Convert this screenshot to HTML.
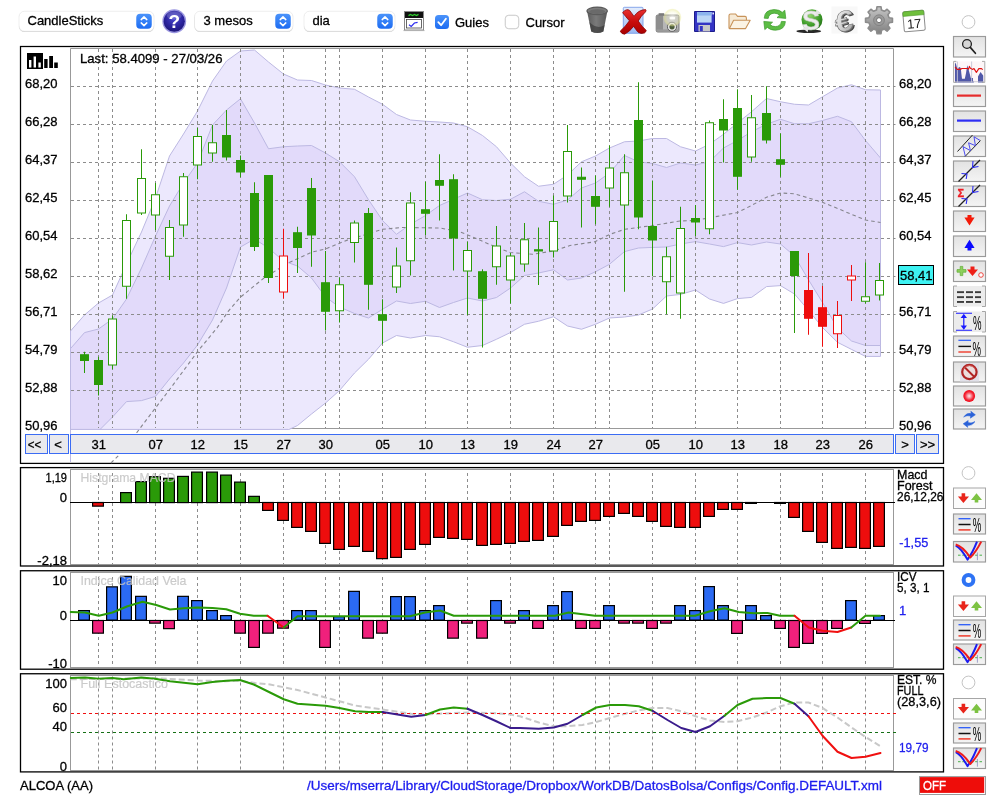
<!DOCTYPE html>
<html lang="ca"><head><meta charset="utf-8"><title>ALCOA (AA)</title>
<style>html,body{margin:0;padding:0;background:#fff;}body{width:1000px;height:800px;overflow:hidden;position:relative;font-family:"Liberation Sans", sans-serif;}svg{position:absolute;left:0;top:0;display:block;will-change:transform;}text{font-family:"Liberation Sans", sans-serif;}</style></head><body>
<svg width="1000" height="800" viewBox="0 0 1000 800">
<defs>
<linearGradient id="btn" x1="0" y1="0" x2="0" y2="1"><stop offset="0" stop-color="#e2e2e2"/><stop offset="1" stop-color="#f4f4f4"/></linearGradient>
<linearGradient id="stp" x1="0" y1="0" x2="0" y2="1"><stop offset="0" stop-color="#4b93fa"/><stop offset="1" stop-color="#1d6cf2"/></linearGradient>
<radialGradient id="help" cx="0.5" cy="0.35" r="0.7"><stop offset="0" stop-color="#4a48d0"/><stop offset="0.6" stop-color="#2a229c"/><stop offset="1" stop-color="#1a1470"/></radialGradient>
<radialGradient id="reddot" cx="0.5" cy="0.5" r="0.5"><stop offset="0" stop-color="#ffe8e8"/><stop offset="0.3" stop-color="#f8a0a8"/><stop offset="0.72" stop-color="#f42838"/><stop offset="1" stop-color="#f00818"/></radialGradient>
<radialGradient id="gsphere" cx="0.4" cy="0.3" r="0.8"><stop offset="0" stop-color="#8ed36a"/><stop offset="0.6" stop-color="#3c9a28"/><stop offset="1" stop-color="#1d6412"/></radialGradient>
<linearGradient id="silver" x1="0" y1="0" x2="1" y2="1"><stop offset="0" stop-color="#ffffff"/><stop offset="0.5" stop-color="#d0d0d0"/><stop offset="1" stop-color="#9a9a9a"/></linearGradient>
<linearGradient id="gear" x1="0" y1="0" x2="0" y2="1"><stop offset="0" stop-color="#c6c6c6"/><stop offset="1" stop-color="#808080"/></linearGradient>
<linearGradient id="trash" x1="0" y1="0" x2="1" y2="0"><stop offset="0" stop-color="#5c5c5c"/><stop offset="0.45" stop-color="#7a7a7a"/><stop offset="1" stop-color="#585858"/></linearGradient>
<radialGradient id="glow" cx="0.5" cy="0.5" r="0.5"><stop offset="0" stop-color="#ffffff" stop-opacity="0.8"/><stop offset="0.5" stop-color="#fbfbe4" stop-opacity="0.35"/><stop offset="0.85" stop-color="#e8e894" stop-opacity="0.5"/><stop offset="1" stop-color="#ecec9c" stop-opacity="0"/></radialGradient>
<linearGradient id="page" x1="0" y1="0" x2="0" y2="1"><stop offset="0" stop-color="#e4edfc"/><stop offset="1" stop-color="#9ab8f2"/></linearGradient>
<linearGradient id="redx" x1="0" y1="0" x2="0" y2="1"><stop offset="0" stop-color="#e83030"/><stop offset="0.5" stop-color="#c80c0c"/><stop offset="1" stop-color="#a80000"/></linearGradient>
<clipPath id="cm"><rect x="70" y="48.5" width="823.5" height="381.5"/></clipPath>
<clipPath id="cr1"><rect x="894" y="468" width="49" height="98"/></clipPath>
<filter id="sh" x="-10%" y="-20%" width="120%" height="160%"><feGaussianBlur stdDeviation="0.7"/></filter>
</defs>
<g id="main">
<rect x="20.5" y="46.5" width="923" height="416.9" fill="#fff" stroke="#000" stroke-width="1.25"/>
<path d="M70.5 429 V48.5 H893.5 V428.5 H71" fill="none" stroke="#999"/>
<g clip-path="url(#cm)">
<polygon points="70.5,331 84.5,315 98.5,303 112.5,295 126.5,264 141.5,232 155.5,198 169.5,156 183.5,134 197.5,111 212.5,81 226.5,61 240.5,51 254.5,50 268.5,62 283.5,74 297.5,80 311.5,80.5 325.5,85 339.5,88 354.5,89.25 368.5,97 382.5,104.25 396.5,114.5 410.5,120 425.5,121.25 439.5,122 453.5,123 467.5,126.75 482.5,135.5 496.5,146.75 510.5,163 524.5,176.75 538.5,186.25 553.5,184.25 567.5,175 581.5,161.75 595.5,156 609.5,148 624.5,141.75 638.5,141 652.5,138.5 666.5,138.5 680.5,146.75 695.5,151 709.5,144.25 723.5,134.25 737.5,123 751.5,111.75 766.5,98.5 780.5,101.75 794.5,104.25 808.5,105 822.5,96.75 837.5,88 851.5,84.75 865.5,89.75 880.5,90 880.5,356.4 865.5,356.4 851.5,349.4 837.5,342.3 822.5,327.5 808.5,310.3 794.5,294 780.5,285.6 766.5,286.6 751.5,297.4 737.5,298.6 723.5,303.4 709.5,299 695.5,290 680.5,294.4 666.5,296 652.5,309 638.5,315 624.5,317 609.5,318 595.5,324.25 581.5,329.25 567.5,326 553.5,316.75 538.5,321.25 524.5,324.25 510.5,332.5 496.5,339.25 482.5,345.5 467.5,347.25 453.5,341.75 439.5,336.75 425.5,335.5 410.5,338 396.5,335.5 382.5,343 368.5,359.25 354.5,373 339.5,390.5 325.5,403 311.5,414 297.5,425.5 283.5,432 268.5,445 254.5,460 240.5,475 226.5,490 212.5,510 197.5,530 183.5,550 169.5,570 155.5,590 141.5,610 126.5,630 112.5,650 98.5,670 84.5,690 70.5,700" fill="#ece8fd" stroke="#bcb8e2" stroke-width="1"/>
<polygon points="70.5,348.6 84.5,332.6 98.5,329 112.5,319 126.5,299 141.5,268 155.5,236 169.5,206 183.5,183 197.5,163 212.5,125 226.5,110 240.5,98.75 254.5,123 268.5,148.75 283.5,146.75 297.5,146 311.5,145.5 325.5,153 339.5,161.75 354.5,176.75 368.5,199.75 382.5,220.5 396.5,234.25 410.5,224.25 425.5,215.5 439.5,205.5 453.5,199.25 467.5,193 482.5,199.75 496.5,200.5 510.5,199.25 524.5,191.75 538.5,201.25 553.5,204.25 567.5,200 581.5,188 595.5,183 609.5,173 624.5,155.5 638.5,161.75 652.5,163.5 666.5,167.5 680.5,163 695.5,165 709.5,161.75 723.5,148 737.5,140.5 751.5,131.75 766.5,124.25 780.5,119.25 794.5,123.75 808.5,123.75 822.5,120.5 837.5,116.25 851.5,121.75 865.5,140.5 880.5,158 880.5,345.5 865.5,345.5 851.5,341 837.5,328 822.5,302.5 808.5,279.8 794.5,256 780.5,244 766.5,242 751.5,245 737.5,242.6 723.5,246.6 709.5,244 695.5,241.6 680.5,244 666.5,247 652.5,247.4 638.5,248 624.5,251.6 609.5,264.25 595.5,271.75 581.5,278 567.5,280 553.5,269.75 538.5,273 524.5,275.5 510.5,288 496.5,297.5 482.5,301 467.5,298 453.5,302.5 439.5,307.5 425.5,301.25 410.5,303.5 396.5,301 382.5,309.25 368.5,318 354.5,313.5 339.5,307 325.5,297 311.5,278 297.5,266 283.5,261 268.5,248 254.5,239 240.5,247 226.5,288 212.5,320 197.5,345 183.5,363 169.5,379 155.5,396.4 141.5,400.6 126.5,401.6 112.5,417 98.5,431 84.5,445 70.5,470" fill="#e2dafa" stroke="#bcb8e2" stroke-width="1"/>
<line x1="70.5" y1="429.4" x2="288" y2="429.4" stroke="#bcb8e2"/>
</g>
<line x1="70.5" y1="331" x2="70.5" y2="462" stroke="#bcb8e2"/>
<g stroke="#8c8c8c" stroke-width="1" stroke-dasharray="3 3" fill="none">
<line x1="71" y1="86.5" x2="895.5" y2="86.5"/>
<line x1="71" y1="124.5" x2="895.5" y2="124.5"/>
<line x1="71" y1="162.5" x2="895.5" y2="162.5"/>
<line x1="71" y1="200.5" x2="895.5" y2="200.5"/>
<line x1="71" y1="238.5" x2="895.5" y2="238.5"/>
<line x1="71" y1="276.5" x2="895.5" y2="276.5"/>
<line x1="71" y1="314.5" x2="895.5" y2="314.5"/>
<line x1="71" y1="352.5" x2="895.5" y2="352.5"/>
<line x1="71" y1="390.5" x2="895.5" y2="390.5"/>
<line x1="98.5" y1="49" x2="98.5" y2="428"/>
<line x1="112.5" y1="49" x2="112.5" y2="428"/>
<line x1="155.5" y1="49" x2="155.5" y2="428"/>
<line x1="197.5" y1="49" x2="197.5" y2="428"/>
<line x1="240.5" y1="49" x2="240.5" y2="428"/>
<line x1="283.5" y1="49" x2="283.5" y2="428"/>
<line x1="325.5" y1="49" x2="325.5" y2="428"/>
<line x1="339.5" y1="49" x2="339.5" y2="428"/>
<line x1="382.5" y1="49" x2="382.5" y2="428"/>
<line x1="425.5" y1="49" x2="425.5" y2="428"/>
<line x1="467.5" y1="49" x2="467.5" y2="428"/>
<line x1="510.5" y1="49" x2="510.5" y2="428"/>
<line x1="553.5" y1="49" x2="553.5" y2="428"/>
<line x1="595.5" y1="49" x2="595.5" y2="428"/>
<line x1="609.5" y1="49" x2="609.5" y2="428"/>
<line x1="652.5" y1="49" x2="652.5" y2="428"/>
<line x1="695.5" y1="49" x2="695.5" y2="428"/>
<line x1="737.5" y1="49" x2="737.5" y2="428"/>
<line x1="780.5" y1="49" x2="780.5" y2="428"/>
<line x1="822.5" y1="49" x2="822.5" y2="428"/>
<line x1="865.5" y1="49" x2="865.5" y2="428"/>
</g>
<polyline points="111,463 118.6,455.4 136,433.6 155.4,408 170,389 198,351 217,328 228,311.6 240.6,297 264,278 288,263 312,252 325.4,249 350,239 354.5,238 382.5,229.25 402.5,227.5 440,228 460,231.75 475,238 495,246.75 510,252.5 532.5,254.25 553.5,251 570,245.5 595,241.75 610,234.25 625,229.25 652.5,225.5 680,221 695,220.5 715,216.75 737.5,212.5 751.5,205.5 766.5,197.25 780.5,193 794.5,193.75 808.5,198 822.5,202.25 836.5,208 851.25,214.25 865.5,220 880.5,222.5" fill="none" stroke="#85858c" stroke-width="1.1" stroke-dasharray="3.6 3"/>
<line x1="84.5" y1="351.75" x2="84.5" y2="373" stroke="#2a9a08" stroke-width="1"/>
<rect x="80.5" y="354.75" width="8" height="5.75" fill="#2a9a08" stroke="#2a9a08" stroke-width="1"/>
<line x1="98.5" y1="356.75" x2="98.5" y2="395.5" stroke="#2a9a08" stroke-width="1"/>
<rect x="94.5" y="360.5" width="8" height="24" fill="#2a9a08" stroke="#2a9a08" stroke-width="1"/>
<line x1="112.5" y1="315.5" x2="112.5" y2="369.25" stroke="#2a9a08" stroke-width="1"/>
<rect x="108.5" y="319" width="8" height="46" fill="#fff" stroke="#2a9a08" stroke-width="1"/>
<line x1="126.5" y1="214.25" x2="126.5" y2="298.75" stroke="#2a9a08" stroke-width="1"/>
<rect x="122.5" y="220.5" width="8" height="65.75" fill="#fff" stroke="#2a9a08" stroke-width="1"/>
<line x1="141.5" y1="149.25" x2="141.5" y2="215" stroke="#2a9a08" stroke-width="1"/>
<rect x="137.5" y="178.5" width="8" height="34.5" fill="#fff" stroke="#2a9a08" stroke-width="1"/>
<line x1="155.5" y1="183" x2="155.5" y2="230" stroke="#2a9a08" stroke-width="1"/>
<rect x="151.5" y="194.75" width="8" height="20.25" fill="#fff" stroke="#2a9a08" stroke-width="1"/>
<line x1="169.5" y1="220" x2="169.5" y2="280" stroke="#2a9a08" stroke-width="1"/>
<rect x="165.5" y="227.5" width="8" height="28.75" fill="#fff" stroke="#2a9a08" stroke-width="1"/>
<line x1="183.5" y1="173" x2="183.5" y2="236.75" stroke="#2a9a08" stroke-width="1"/>
<rect x="179.5" y="176.75" width="8" height="48.25" fill="#fff" stroke="#2a9a08" stroke-width="1"/>
<line x1="197.5" y1="128" x2="197.5" y2="179.25" stroke="#2a9a08" stroke-width="1"/>
<rect x="193.5" y="136.5" width="8" height="28.5" fill="#fff" stroke="#2a9a08" stroke-width="1"/>
<line x1="212.5" y1="125" x2="212.5" y2="161.75" stroke="#2a9a08" stroke-width="1"/>
<rect x="208.5" y="142.75" width="8" height="10.25" fill="#fff" stroke="#2a9a08" stroke-width="1"/>
<line x1="226.5" y1="110" x2="226.5" y2="160.5" stroke="#2a9a08" stroke-width="1"/>
<rect x="222.5" y="135.5" width="8" height="21.5" fill="#2a9a08" stroke="#2a9a08" stroke-width="1"/>
<line x1="240.5" y1="155.5" x2="240.5" y2="177.25" stroke="#2a9a08" stroke-width="1"/>
<rect x="236.5" y="160.5" width="8" height="11.5" fill="#2a9a08" stroke="#2a9a08" stroke-width="1"/>
<line x1="254.5" y1="182.25" x2="254.5" y2="251" stroke="#2a9a08" stroke-width="1"/>
<rect x="250.5" y="193.5" width="8" height="53" fill="#2a9a08" stroke="#2a9a08" stroke-width="1"/>
<line x1="268.5" y1="175" x2="268.5" y2="283" stroke="#2a9a08" stroke-width="1"/>
<rect x="264.5" y="175.5" width="8" height="102" fill="#2a9a08" stroke="#2a9a08" stroke-width="1"/>
<line x1="283.5" y1="228.75" x2="283.5" y2="298.75" stroke="#ee0d0d" stroke-width="1"/>
<rect x="279.5" y="256" width="8" height="36" fill="#fff" stroke="#ee0d0d" stroke-width="1"/>
<line x1="297.5" y1="226.75" x2="297.5" y2="273" stroke="#2a9a08" stroke-width="1"/>
<rect x="293.5" y="232.75" width="8" height="14.75" fill="#2a9a08" stroke="#2a9a08" stroke-width="1"/>
<line x1="311.5" y1="178" x2="311.5" y2="266.75" stroke="#2a9a08" stroke-width="1"/>
<rect x="307.5" y="188.5" width="8" height="46.5" fill="#2a9a08" stroke="#2a9a08" stroke-width="1"/>
<line x1="325.5" y1="251" x2="325.5" y2="330.5" stroke="#2a9a08" stroke-width="1"/>
<rect x="321.5" y="282.75" width="8" height="28.5" fill="#2a9a08" stroke="#2a9a08" stroke-width="1"/>
<line x1="339.5" y1="277.5" x2="339.5" y2="322.5" stroke="#2a9a08" stroke-width="1"/>
<rect x="335.5" y="284.75" width="8" height="26" fill="#fff" stroke="#2a9a08" stroke-width="1"/>
<line x1="354.5" y1="220.5" x2="354.5" y2="262.5" stroke="#2a9a08" stroke-width="1"/>
<rect x="350.5" y="223" width="8" height="19.5" fill="#fff" stroke="#2a9a08" stroke-width="1"/>
<line x1="368.5" y1="208" x2="368.5" y2="309.75" stroke="#2a9a08" stroke-width="1"/>
<rect x="364.5" y="213.5" width="8" height="70.75" fill="#2a9a08" stroke="#2a9a08" stroke-width="1"/>
<line x1="382.5" y1="299.25" x2="382.5" y2="344.25" stroke="#2a9a08" stroke-width="1"/>
<rect x="378.5" y="314.75" width="8" height="5.5" fill="#2a9a08" stroke="#2a9a08" stroke-width="1"/>
<line x1="396.5" y1="247.5" x2="396.5" y2="293" stroke="#2a9a08" stroke-width="1"/>
<rect x="392.5" y="266" width="8" height="21" fill="#fff" stroke="#2a9a08" stroke-width="1"/>
<line x1="410.5" y1="192.25" x2="410.5" y2="275.5" stroke="#2a9a08" stroke-width="1"/>
<rect x="406.5" y="203" width="8" height="57.75" fill="#fff" stroke="#2a9a08" stroke-width="1"/>
<line x1="425.5" y1="181.75" x2="425.5" y2="235" stroke="#2a9a08" stroke-width="1"/>
<rect x="421.5" y="209.75" width="8" height="3.5" fill="#2a9a08" stroke="#2a9a08" stroke-width="1"/>
<line x1="439.5" y1="154.25" x2="439.5" y2="220.5" stroke="#2a9a08" stroke-width="1"/>
<rect x="435.5" y="180.5" width="8" height="4.75" fill="#2a9a08" stroke="#2a9a08" stroke-width="1"/>
<line x1="453.5" y1="174.25" x2="453.5" y2="270.5" stroke="#2a9a08" stroke-width="1"/>
<rect x="449.5" y="179.75" width="8" height="58.25" fill="#2a9a08" stroke="#2a9a08" stroke-width="1"/>
<line x1="467.5" y1="241.75" x2="467.5" y2="315" stroke="#2a9a08" stroke-width="1"/>
<rect x="463.5" y="250.5" width="8" height="20.5" fill="#fff" stroke="#2a9a08" stroke-width="1"/>
<line x1="482.5" y1="269.25" x2="482.5" y2="347.5" stroke="#2a9a08" stroke-width="1"/>
<rect x="478.5" y="271.75" width="8" height="26.5" fill="#2a9a08" stroke="#2a9a08" stroke-width="1"/>
<line x1="496.5" y1="226" x2="496.5" y2="284.75" stroke="#2a9a08" stroke-width="1"/>
<rect x="492.5" y="246" width="8" height="20.75" fill="#fff" stroke="#2a9a08" stroke-width="1"/>
<line x1="510.5" y1="253" x2="510.5" y2="303.5" stroke="#2a9a08" stroke-width="1"/>
<rect x="506.5" y="256" width="8" height="24" fill="#fff" stroke="#2a9a08" stroke-width="1"/>
<line x1="524.5" y1="223" x2="524.5" y2="271.75" stroke="#2a9a08" stroke-width="1"/>
<rect x="520.5" y="239.75" width="8" height="24.25" fill="#fff" stroke="#2a9a08" stroke-width="1"/>
<line x1="538.5" y1="227.5" x2="538.5" y2="285" stroke="#2a9a08" stroke-width="1"/>
<rect x="534.5" y="249.75" width="8" height="1.25" fill="#2a9a08" stroke="#2a9a08" stroke-width="1"/>
<line x1="553.5" y1="195.5" x2="553.5" y2="257.5" stroke="#2a9a08" stroke-width="1"/>
<rect x="549.5" y="221.5" width="8" height="29.5" fill="#fff" stroke="#2a9a08" stroke-width="1"/>
<line x1="567.5" y1="125" x2="567.5" y2="202.5" stroke="#2a9a08" stroke-width="1"/>
<rect x="563.5" y="151.5" width="8" height="44.5" fill="#fff" stroke="#2a9a08" stroke-width="1"/>
<line x1="581.5" y1="167.5" x2="581.5" y2="227.5" stroke="#2a9a08" stroke-width="1"/>
<rect x="577.5" y="177.25" width="8" height="2" fill="#2a9a08" stroke="#2a9a08" stroke-width="1"/>
<line x1="595.5" y1="175.5" x2="595.5" y2="224.25" stroke="#2a9a08" stroke-width="1"/>
<rect x="591.5" y="196.5" width="8" height="9.75" fill="#2a9a08" stroke="#2a9a08" stroke-width="1"/>
<line x1="609.5" y1="145.5" x2="609.5" y2="206.75" stroke="#2a9a08" stroke-width="1"/>
<rect x="605.5" y="168" width="8" height="20" fill="#fff" stroke="#2a9a08" stroke-width="1"/>
<line x1="624.5" y1="154.25" x2="624.5" y2="291.75" stroke="#2a9a08" stroke-width="1"/>
<rect x="620.5" y="172.75" width="8" height="32.25" fill="#fff" stroke="#2a9a08" stroke-width="1"/>
<line x1="638.5" y1="82.25" x2="638.5" y2="229.25" stroke="#2a9a08" stroke-width="1"/>
<rect x="634.5" y="120.5" width="8" height="96.5" fill="#2a9a08" stroke="#2a9a08" stroke-width="1"/>
<line x1="652.5" y1="180.5" x2="652.5" y2="276.25" stroke="#2a9a08" stroke-width="1"/>
<rect x="648.5" y="226.5" width="8" height="13.5" fill="#2a9a08" stroke="#2a9a08" stroke-width="1"/>
<line x1="666.5" y1="246.75" x2="666.5" y2="314.25" stroke="#2a9a08" stroke-width="1"/>
<rect x="662.5" y="256.75" width="8" height="25" fill="#fff" stroke="#2a9a08" stroke-width="1"/>
<line x1="680.5" y1="206.75" x2="680.5" y2="318.75" stroke="#2a9a08" stroke-width="1"/>
<rect x="676.5" y="228.5" width="8" height="64.5" fill="#fff" stroke="#2a9a08" stroke-width="1"/>
<line x1="695.5" y1="205" x2="695.5" y2="236" stroke="#2a9a08" stroke-width="1"/>
<rect x="691.5" y="218.5" width="8" height="3.5" fill="#2a9a08" stroke="#2a9a08" stroke-width="1"/>
<line x1="709.5" y1="120.5" x2="709.5" y2="234.25" stroke="#2a9a08" stroke-width="1"/>
<rect x="705.5" y="122.75" width="8" height="106" fill="#fff" stroke="#2a9a08" stroke-width="1"/>
<line x1="723.5" y1="99.25" x2="723.5" y2="162.5" stroke="#2a9a08" stroke-width="1"/>
<rect x="719.5" y="119.5" width="8" height="10.5" fill="#2a9a08" stroke="#2a9a08" stroke-width="1"/>
<line x1="737.5" y1="89.25" x2="737.5" y2="189.75" stroke="#2a9a08" stroke-width="1"/>
<rect x="733.5" y="108.5" width="8" height="67.75" fill="#2a9a08" stroke="#2a9a08" stroke-width="1"/>
<line x1="751.5" y1="95" x2="751.5" y2="161.75" stroke="#2a9a08" stroke-width="1"/>
<rect x="747.5" y="117.75" width="8" height="39.25" fill="#fff" stroke="#2a9a08" stroke-width="1"/>
<line x1="766.5" y1="86.25" x2="766.5" y2="143.5" stroke="#2a9a08" stroke-width="1"/>
<rect x="762.5" y="113.5" width="8" height="26.5" fill="#2a9a08" stroke="#2a9a08" stroke-width="1"/>
<line x1="780.5" y1="133.5" x2="780.5" y2="176.75" stroke="#2a9a08" stroke-width="1"/>
<rect x="776.5" y="159.75" width="8" height="4.5" fill="#2a9a08" stroke="#2a9a08" stroke-width="1"/>
<line x1="794.5" y1="251" x2="794.5" y2="333" stroke="#2a9a08" stroke-width="1"/>
<rect x="790.5" y="251.5" width="8" height="24" fill="#2a9a08" stroke="#2a9a08" stroke-width="1"/>
<line x1="808.5" y1="253" x2="808.5" y2="334.75" stroke="#ee0d0d" stroke-width="1"/>
<rect x="804.5" y="290.5" width="8" height="27.75" fill="#ee0d0d" stroke="#ee0d0d" stroke-width="1"/>
<line x1="822.5" y1="286" x2="822.5" y2="346.75" stroke="#ee0d0d" stroke-width="1"/>
<rect x="818.5" y="307.75" width="8" height="18.5" fill="#ee0d0d" stroke="#ee0d0d" stroke-width="1"/>
<line x1="837.5" y1="301" x2="837.5" y2="348" stroke="#ee0d0d" stroke-width="1"/>
<rect x="833.5" y="315.5" width="8" height="18.25" fill="#fff" stroke="#ee0d0d" stroke-width="1"/>
<line x1="851.5" y1="265" x2="851.5" y2="301" stroke="#ee0d0d" stroke-width="1"/>
<rect x="847.5" y="276" width="8" height="4" fill="#fff" stroke="#ee0d0d" stroke-width="1"/>
<line x1="865.5" y1="262.25" x2="865.5" y2="303.5" stroke="#2a9a08" stroke-width="1"/>
<rect x="861.5" y="296.75" width="8" height="4.5" fill="#fff" stroke="#2a9a08" stroke-width="1"/>
<line x1="879.5" y1="263" x2="879.5" y2="300.5" stroke="#2a9a08" stroke-width="1"/>
<rect x="875.5" y="280.5" width="8" height="14.5" fill="#fff" stroke="#2a9a08" stroke-width="1"/>
<rect x="25.5" y="434.5" width="22" height="19" fill="#e9e9ed" stroke="#3b6cf4"/>
<rect x="49.5" y="434.5" width="19" height="19" fill="#e9e9ed" stroke="#3b6cf4"/>
<rect x="70.5" y="434.5" width="823" height="19" fill="#e9e9ed" stroke="#3b6cf4"/>
<rect x="895.5" y="434.5" width="19" height="19" fill="#e9e9ed" stroke="#3b6cf4"/>
<rect x="916.5" y="434.5" width="22" height="19" fill="#e9e9ed" stroke="#3b6cf4"/>
<text x="34.5" y="448.5" font-size="13" fill="#000" stroke="#000" stroke-width="0.3" text-anchor="middle" textLength="13.5" lengthAdjust="spacingAndGlyphs">&lt;&lt;</text>
<text x="58" y="448.5" font-size="13" fill="#000" stroke="#000" stroke-width="0.3" text-anchor="middle">&lt;</text>
<text x="905" y="448.5" font-size="13" fill="#000" stroke="#000" stroke-width="0.3" text-anchor="middle">&gt;</text>
<text x="927.5" y="448.5" font-size="13" fill="#000" stroke="#000" stroke-width="0.3" text-anchor="middle">&gt;&gt;</text>
<text x="98.7" y="449" font-size="13" fill="#000" stroke="#000" stroke-width="0.3" text-anchor="middle">31</text>
<text x="155.7" y="449" font-size="13" fill="#000" stroke="#000" stroke-width="0.3" text-anchor="middle">07</text>
<text x="197.7" y="449" font-size="13" fill="#000" stroke="#000" stroke-width="0.3" text-anchor="middle">12</text>
<text x="240.7" y="449" font-size="13" fill="#000" stroke="#000" stroke-width="0.3" text-anchor="middle">15</text>
<text x="283.7" y="449" font-size="13" fill="#000" stroke="#000" stroke-width="0.3" text-anchor="middle">27</text>
<text x="325.7" y="449" font-size="13" fill="#000" stroke="#000" stroke-width="0.3" text-anchor="middle">30</text>
<text x="382.7" y="449" font-size="13" fill="#000" stroke="#000" stroke-width="0.3" text-anchor="middle">05</text>
<text x="425.7" y="449" font-size="13" fill="#000" stroke="#000" stroke-width="0.3" text-anchor="middle">10</text>
<text x="467.7" y="449" font-size="13" fill="#000" stroke="#000" stroke-width="0.3" text-anchor="middle">13</text>
<text x="510.7" y="449" font-size="13" fill="#000" stroke="#000" stroke-width="0.3" text-anchor="middle">19</text>
<text x="553.7" y="449" font-size="13" fill="#000" stroke="#000" stroke-width="0.3" text-anchor="middle">24</text>
<text x="595.7" y="449" font-size="13" fill="#000" stroke="#000" stroke-width="0.3" text-anchor="middle">27</text>
<text x="652.7" y="449" font-size="13" fill="#000" stroke="#000" stroke-width="0.3" text-anchor="middle">05</text>
<text x="695.7" y="449" font-size="13" fill="#000" stroke="#000" stroke-width="0.3" text-anchor="middle">10</text>
<text x="737.7" y="449" font-size="13" fill="#000" stroke="#000" stroke-width="0.3" text-anchor="middle">13</text>
<text x="780.7" y="449" font-size="13" fill="#000" stroke="#000" stroke-width="0.3" text-anchor="middle">18</text>
<text x="822.7" y="449" font-size="13" fill="#000" stroke="#000" stroke-width="0.3" text-anchor="middle">23</text>
<text x="865.7" y="449" font-size="13" fill="#000" stroke="#000" stroke-width="0.3" text-anchor="middle">26</text>
<text x="25" y="88" font-size="13" fill="#000" stroke="#000" stroke-width="0.3">68,20</text>
<text x="899" y="88" font-size="13" fill="#000" stroke="#000" stroke-width="0.3">68,20</text>
<text x="25" y="126" font-size="13" fill="#000" stroke="#000" stroke-width="0.3">66,28</text>
<text x="899" y="126" font-size="13" fill="#000" stroke="#000" stroke-width="0.3">66,28</text>
<text x="25" y="164" font-size="13" fill="#000" stroke="#000" stroke-width="0.3">64,37</text>
<text x="899" y="164" font-size="13" fill="#000" stroke="#000" stroke-width="0.3">64,37</text>
<text x="25" y="202" font-size="13" fill="#000" stroke="#000" stroke-width="0.3">62,45</text>
<text x="899" y="202" font-size="13" fill="#000" stroke="#000" stroke-width="0.3">62,45</text>
<text x="25" y="240" font-size="13" fill="#000" stroke="#000" stroke-width="0.3">60,54</text>
<text x="899" y="240" font-size="13" fill="#000" stroke="#000" stroke-width="0.3">60,54</text>
<text x="25" y="278" font-size="13" fill="#000" stroke="#000" stroke-width="0.3">58,62</text>
<text x="25" y="316" font-size="13" fill="#000" stroke="#000" stroke-width="0.3">56,71</text>
<text x="899" y="316" font-size="13" fill="#000" stroke="#000" stroke-width="0.3">56,71</text>
<text x="25" y="354" font-size="13" fill="#000" stroke="#000" stroke-width="0.3">54,79</text>
<text x="899" y="354" font-size="13" fill="#000" stroke="#000" stroke-width="0.3">54,79</text>
<text x="25" y="392" font-size="13" fill="#000" stroke="#000" stroke-width="0.3">52,88</text>
<text x="899" y="392" font-size="13" fill="#000" stroke="#000" stroke-width="0.3">52,88</text>
<text x="25" y="430" font-size="13" fill="#000" stroke="#000" stroke-width="0.3">50,96</text>
<text x="899" y="430" font-size="13" fill="#000" stroke="#000" stroke-width="0.3">50,96</text>
<rect x="898.5" y="265.5" width="35" height="19" fill="#3ef2f2" stroke="#000"/>
<text x="900" y="280" font-size="13" fill="#000" stroke="#000" stroke-width="0.3">58,41</text>
<text x="80" y="63" font-size="13" fill="#000" stroke="#000" stroke-width="0.3" textLength="142.5" lengthAdjust="spacingAndGlyphs">Last: 58.4099 - 27/03/26</text>
<g><rect x="27" y="53" width="16" height="16" fill="#000"/><rect x="29" y="60" width="2.4" height="7.5" fill="#fff"/><rect x="33.6" y="56.5" width="2.4" height="11" fill="#fff"/><rect x="38.4" y="62.5" width="2.4" height="5" fill="#fff"/><rect x="44.2" y="59" width="3.4" height="9" fill="#000"/><rect x="49.2" y="56" width="3.8" height="12" fill="#000"/><rect x="54.2" y="62.5" width="3.6" height="5.5" fill="#000"/></g>
</g>
<g id="macd">
<rect x="20.5" y="467.6" width="923" height="98.4" fill="#fff" stroke="#000" stroke-width="1.3"/>
<rect x="70.5" y="469.5" width="823" height="95.0" fill="none" stroke="#999"/>
<g stroke="#8c8c8c" stroke-width="1" stroke-dasharray="3 3">
<line x1="98.5" y1="473" x2="98.5" y2="564.5"/>
<line x1="112.5" y1="473" x2="112.5" y2="564.5"/>
<line x1="155.5" y1="473" x2="155.5" y2="564.5"/>
<line x1="197.5" y1="473" x2="197.5" y2="564.5"/>
<line x1="240.5" y1="473" x2="240.5" y2="564.5"/>
<line x1="283.5" y1="473" x2="283.5" y2="564.5"/>
<line x1="325.5" y1="473" x2="325.5" y2="564.5"/>
<line x1="339.5" y1="473" x2="339.5" y2="564.5"/>
<line x1="382.5" y1="473" x2="382.5" y2="564.5"/>
<line x1="425.5" y1="473" x2="425.5" y2="564.5"/>
<line x1="467.5" y1="473" x2="467.5" y2="564.5"/>
<line x1="510.5" y1="473" x2="510.5" y2="564.5"/>
<line x1="553.5" y1="473" x2="553.5" y2="564.5"/>
<line x1="595.5" y1="473" x2="595.5" y2="564.5"/>
<line x1="609.5" y1="473" x2="609.5" y2="564.5"/>
<line x1="652.5" y1="473" x2="652.5" y2="564.5"/>
<line x1="695.5" y1="473" x2="695.5" y2="564.5"/>
<line x1="737.5" y1="473" x2="737.5" y2="564.5"/>
<line x1="780.5" y1="473" x2="780.5" y2="564.5"/>
<line x1="822.5" y1="473" x2="822.5" y2="564.5"/>
<line x1="865.5" y1="473" x2="865.5" y2="564.5"/>
</g>
<rect x="92.6" y="502.5" width="10.8" height="3.65" fill="#ee0d0d" stroke="#000" stroke-width="1.2"/>
<rect x="120.6" y="492.6" width="10.8" height="10" fill="#2a9a08" stroke="#000" stroke-width="1.2"/>
<rect x="135.6" y="481.6" width="10.8" height="21" fill="#2a9a08" stroke="#000" stroke-width="1.2"/>
<rect x="149.6" y="476.7" width="10.8" height="25.9" fill="#2a9a08" stroke="#000" stroke-width="1.2"/>
<rect x="163.6" y="478.3" width="10.8" height="24.3" fill="#2a9a08" stroke="#000" stroke-width="1.2"/>
<rect x="177.6" y="476.4" width="10.8" height="26.2" fill="#2a9a08" stroke="#000" stroke-width="1.2"/>
<rect x="191.6" y="472.1" width="10.8" height="30.5" fill="#2a9a08" stroke="#000" stroke-width="1.2"/>
<rect x="206.6" y="472.1" width="10.8" height="30.5" fill="#2a9a08" stroke="#000" stroke-width="1.2"/>
<rect x="220.6" y="475.1" width="10.8" height="27.5" fill="#2a9a08" stroke="#000" stroke-width="1.2"/>
<rect x="234.6" y="482.1" width="10.8" height="20.5" fill="#2a9a08" stroke="#000" stroke-width="1.2"/>
<rect x="248.6" y="496.35" width="10.8" height="6.25" fill="#2a9a08" stroke="#000" stroke-width="1.2"/>
<rect x="262.6" y="502.5" width="10.8" height="7.9" fill="#ee0d0d" stroke="#000" stroke-width="1.2"/>
<rect x="277.6" y="502.5" width="10.8" height="17.9" fill="#ee0d0d" stroke="#000" stroke-width="1.2"/>
<rect x="291.6" y="502.5" width="10.8" height="24.9" fill="#ee0d0d" stroke="#000" stroke-width="1.2"/>
<rect x="305.6" y="502.5" width="10.8" height="28.9" fill="#ee0d0d" stroke="#000" stroke-width="1.2"/>
<rect x="319.6" y="502.5" width="10.8" height="40.9" fill="#ee0d0d" stroke="#000" stroke-width="1.2"/>
<rect x="333.6" y="502.5" width="10.8" height="46.9" fill="#ee0d0d" stroke="#000" stroke-width="1.2"/>
<rect x="348.6" y="502.5" width="10.8" height="43.9" fill="#ee0d0d" stroke="#000" stroke-width="1.2"/>
<rect x="362.6" y="502.5" width="10.8" height="48.9" fill="#ee0d0d" stroke="#000" stroke-width="1.2"/>
<rect x="376.6" y="502.5" width="10.8" height="56.15" fill="#ee0d0d" stroke="#000" stroke-width="1.2"/>
<rect x="390.6" y="502.5" width="10.8" height="54.9" fill="#ee0d0d" stroke="#000" stroke-width="1.2"/>
<rect x="404.6" y="502.5" width="10.8" height="46.9" fill="#ee0d0d" stroke="#000" stroke-width="1.2"/>
<rect x="419.6" y="502.5" width="10.8" height="41.9" fill="#ee0d0d" stroke="#000" stroke-width="1.2"/>
<rect x="433.6" y="502.5" width="10.8" height="34.9" fill="#ee0d0d" stroke="#000" stroke-width="1.2"/>
<rect x="447.6" y="502.5" width="10.8" height="35.9" fill="#ee0d0d" stroke="#000" stroke-width="1.2"/>
<rect x="461.6" y="502.5" width="10.8" height="36.9" fill="#ee0d0d" stroke="#000" stroke-width="1.2"/>
<rect x="476.6" y="502.5" width="10.8" height="42.9" fill="#ee0d0d" stroke="#000" stroke-width="1.2"/>
<rect x="490.6" y="502.5" width="10.8" height="41.9" fill="#ee0d0d" stroke="#000" stroke-width="1.2"/>
<rect x="504.6" y="502.5" width="10.8" height="40.9" fill="#ee0d0d" stroke="#000" stroke-width="1.2"/>
<rect x="518.6" y="502.5" width="10.8" height="38.9" fill="#ee0d0d" stroke="#000" stroke-width="1.2"/>
<rect x="532.6" y="502.5" width="10.8" height="37.9" fill="#ee0d0d" stroke="#000" stroke-width="1.2"/>
<rect x="547.6" y="502.5" width="10.8" height="33.9" fill="#ee0d0d" stroke="#000" stroke-width="1.2"/>
<rect x="561.6" y="502.5" width="10.8" height="22.9" fill="#ee0d0d" stroke="#000" stroke-width="1.2"/>
<rect x="575.6" y="502.5" width="10.8" height="18.9" fill="#ee0d0d" stroke="#000" stroke-width="1.2"/>
<rect x="589.6" y="502.5" width="10.8" height="17.9" fill="#ee0d0d" stroke="#000" stroke-width="1.2"/>
<rect x="603.6" y="502.5" width="10.8" height="13.9" fill="#ee0d0d" stroke="#000" stroke-width="1.2"/>
<rect x="618.6" y="502.5" width="10.8" height="10.9" fill="#ee0d0d" stroke="#000" stroke-width="1.2"/>
<rect x="632.6" y="502.5" width="10.8" height="13.9" fill="#ee0d0d" stroke="#000" stroke-width="1.2"/>
<rect x="646.6" y="502.5" width="10.8" height="18.9" fill="#ee0d0d" stroke="#000" stroke-width="1.2"/>
<rect x="660.6" y="502.5" width="10.8" height="23.9" fill="#ee0d0d" stroke="#000" stroke-width="1.2"/>
<rect x="674.6" y="502.5" width="10.8" height="24.9" fill="#ee0d0d" stroke="#000" stroke-width="1.2"/>
<rect x="689.6" y="502.5" width="10.8" height="24.9" fill="#ee0d0d" stroke="#000" stroke-width="1.2"/>
<rect x="703.6" y="502.5" width="10.8" height="13.9" fill="#ee0d0d" stroke="#000" stroke-width="1.2"/>
<rect x="717.6" y="502.5" width="10.8" height="6.9" fill="#ee0d0d" stroke="#000" stroke-width="1.2"/>
<rect x="731.6" y="502.5" width="10.8" height="6.9" fill="#ee0d0d" stroke="#000" stroke-width="1.2"/>
<rect x="745.6" y="502.5" width="10.8" height="0.9" fill="#ee0d0d" stroke="#000" stroke-width="1.2"/>
<rect x="774.6" y="502.5" width="10.8" height="0.9" fill="#ee0d0d" stroke="#000" stroke-width="1.2"/>
<rect x="788.6" y="502.5" width="10.8" height="14.9" fill="#ee0d0d" stroke="#000" stroke-width="1.2"/>
<rect x="802.6" y="502.5" width="10.8" height="28.9" fill="#ee0d0d" stroke="#000" stroke-width="1.2"/>
<rect x="816.6" y="502.5" width="10.8" height="39.9" fill="#ee0d0d" stroke="#000" stroke-width="1.2"/>
<rect x="831.6" y="502.5" width="10.8" height="45.9" fill="#ee0d0d" stroke="#000" stroke-width="1.2"/>
<rect x="845.6" y="502.5" width="10.8" height="44.9" fill="#ee0d0d" stroke="#000" stroke-width="1.2"/>
<rect x="859.6" y="502.5" width="10.8" height="45.9" fill="#ee0d0d" stroke="#000" stroke-width="1.2"/>
<rect x="873.6" y="502.5" width="10.8" height="43.9" fill="#ee0d0d" stroke="#000" stroke-width="1.2"/>
<line x1="70" y1="502.5" x2="895" y2="502.5" stroke="#000"/>
<text x="80.5" y="482" font-size="13" fill="#c2c2c2" stroke="#c2c2c2" stroke-width="0.2" textLength="95" lengthAdjust="spacingAndGlyphs" opacity="0.85">Histgrama MACD</text>
<text x="67" y="482" font-size="13" fill="#000" stroke="#000" stroke-width="0.3" text-anchor="end" textLength="21.5" lengthAdjust="spacingAndGlyphs">1,19</text>
<text x="67" y="502" font-size="13" fill="#000" stroke="#000" stroke-width="0.3" text-anchor="end">0</text>
<text x="67" y="565" font-size="13" fill="#000" stroke="#000" stroke-width="0.3" text-anchor="end">-2,18</text>
<g clip-path="url(#cr1)">
<text x="897" y="478.5" font-size="13" fill="#000" stroke="#000" stroke-width="0.3" textLength="30.5" lengthAdjust="spacingAndGlyphs">Macd</text>
<text x="897" y="489.5" font-size="13" fill="#000" stroke="#000" stroke-width="0.3" textLength="35.5" lengthAdjust="spacingAndGlyphs">Forest</text>
<text x="897" y="500.5" font-size="13" fill="#000" stroke="#000" stroke-width="0.3" textLength="46.5" lengthAdjust="spacingAndGlyphs">26,12,26</text>
</g>
<text x="899.3" y="547" font-size="13" fill="#2222ee" stroke="#2222ee" stroke-width="0.3" textLength="29" lengthAdjust="spacingAndGlyphs">-1,55</text>
</g>
<g id="icv">
<rect x="20.5" y="570.75" width="923" height="98.45" fill="#fff" stroke="#000" stroke-width="1.3"/>
<rect x="70.5" y="572.5" width="823" height="95.0" fill="none" stroke="#999"/>
<g stroke="#8c8c8c" stroke-width="1" stroke-dasharray="3 3">
<line x1="98.5" y1="577" x2="98.5" y2="667.5"/>
<line x1="112.5" y1="577" x2="112.5" y2="667.5"/>
<line x1="155.5" y1="577" x2="155.5" y2="667.5"/>
<line x1="197.5" y1="577" x2="197.5" y2="667.5"/>
<line x1="240.5" y1="577" x2="240.5" y2="667.5"/>
<line x1="283.5" y1="577" x2="283.5" y2="667.5"/>
<line x1="325.5" y1="577" x2="325.5" y2="667.5"/>
<line x1="339.5" y1="577" x2="339.5" y2="667.5"/>
<line x1="382.5" y1="577" x2="382.5" y2="667.5"/>
<line x1="425.5" y1="577" x2="425.5" y2="667.5"/>
<line x1="467.5" y1="577" x2="467.5" y2="667.5"/>
<line x1="510.5" y1="577" x2="510.5" y2="667.5"/>
<line x1="553.5" y1="577" x2="553.5" y2="667.5"/>
<line x1="595.5" y1="577" x2="595.5" y2="667.5"/>
<line x1="609.5" y1="577" x2="609.5" y2="667.5"/>
<line x1="652.5" y1="577" x2="652.5" y2="667.5"/>
<line x1="695.5" y1="577" x2="695.5" y2="667.5"/>
<line x1="737.5" y1="577" x2="737.5" y2="667.5"/>
<line x1="780.5" y1="577" x2="780.5" y2="667.5"/>
<line x1="822.5" y1="577" x2="822.5" y2="667.5"/>
<line x1="865.5" y1="577" x2="865.5" y2="667.5"/>
</g>
<rect x="78.6" y="610.6" width="10.8" height="9.5" fill="#2b6af3" stroke="#000" stroke-width="1.2"/>
<rect x="92.6" y="620.5" width="10.8" height="12.65" fill="#f0207c" stroke="#000" stroke-width="1.2"/>
<rect x="106.6" y="586.85" width="10.8" height="33.25" fill="#2b6af3" stroke="#000" stroke-width="1.2"/>
<rect x="120.6" y="576.35" width="10.8" height="43.75" fill="#2b6af3" stroke="#000" stroke-width="1.2"/>
<rect x="135.6" y="596.35" width="10.8" height="23.75" fill="#2b6af3" stroke="#000" stroke-width="1.2"/>
<rect x="149.6" y="620.5" width="10.8" height="2.65" fill="#f0207c" stroke="#000" stroke-width="1.2"/>
<rect x="163.6" y="620.5" width="10.8" height="8.15" fill="#f0207c" stroke="#000" stroke-width="1.2"/>
<rect x="177.6" y="596.35" width="10.8" height="23.75" fill="#2b6af3" stroke="#000" stroke-width="1.2"/>
<rect x="191.6" y="600.6" width="10.8" height="19.5" fill="#2b6af3" stroke="#000" stroke-width="1.2"/>
<rect x="206.6" y="610.6" width="10.8" height="9.5" fill="#2b6af3" stroke="#000" stroke-width="1.2"/>
<rect x="220.6" y="615.6" width="10.8" height="4.5" fill="#2b6af3" stroke="#000" stroke-width="1.2"/>
<rect x="234.6" y="620.5" width="10.8" height="12.65" fill="#f0207c" stroke="#000" stroke-width="1.2"/>
<rect x="248.6" y="620.5" width="10.8" height="26.9" fill="#f0207c" stroke="#000" stroke-width="1.2"/>
<rect x="262.6" y="620.5" width="10.8" height="12.65" fill="#f0207c" stroke="#000" stroke-width="1.2"/>
<rect x="277.6" y="620.5" width="10.8" height="7.65" fill="#f0207c" stroke="#000" stroke-width="1.2"/>
<rect x="291.6" y="610.6" width="10.8" height="9.5" fill="#2b6af3" stroke="#000" stroke-width="1.2"/>
<rect x="305.6" y="610.6" width="10.8" height="9.5" fill="#2b6af3" stroke="#000" stroke-width="1.2"/>
<rect x="319.6" y="620.5" width="10.8" height="26.9" fill="#f0207c" stroke="#000" stroke-width="1.2"/>
<rect x="333.6" y="616.6" width="10.8" height="3.5" fill="#2b6af3" stroke="#000" stroke-width="1.2"/>
<rect x="348.6" y="591.35" width="10.8" height="28.75" fill="#2b6af3" stroke="#000" stroke-width="1.2"/>
<rect x="362.6" y="620.5" width="10.8" height="17.65" fill="#f0207c" stroke="#000" stroke-width="1.2"/>
<rect x="376.6" y="620.5" width="10.8" height="12.65" fill="#f0207c" stroke="#000" stroke-width="1.2"/>
<rect x="390.6" y="596.6" width="10.8" height="23.5" fill="#2b6af3" stroke="#000" stroke-width="1.2"/>
<rect x="404.6" y="596.6" width="10.8" height="23.5" fill="#2b6af3" stroke="#000" stroke-width="1.2"/>
<rect x="419.6" y="610.6" width="10.8" height="9.5" fill="#2b6af3" stroke="#000" stroke-width="1.2"/>
<rect x="433.6" y="605.6" width="10.8" height="14.5" fill="#2b6af3" stroke="#000" stroke-width="1.2"/>
<rect x="447.6" y="620.5" width="10.8" height="17.65" fill="#f0207c" stroke="#000" stroke-width="1.2"/>
<rect x="461.6" y="620.5" width="10.8" height="2.65" fill="#f0207c" stroke="#000" stroke-width="1.2"/>
<rect x="476.6" y="620.5" width="10.8" height="17.65" fill="#f0207c" stroke="#000" stroke-width="1.2"/>
<rect x="490.6" y="600.6" width="10.8" height="19.5" fill="#2b6af3" stroke="#000" stroke-width="1.2"/>
<rect x="504.6" y="620.5" width="10.8" height="2.65" fill="#f0207c" stroke="#000" stroke-width="1.2"/>
<rect x="518.6" y="610.6" width="10.8" height="9.5" fill="#2b6af3" stroke="#000" stroke-width="1.2"/>
<rect x="532.6" y="620.5" width="10.8" height="7.9" fill="#f0207c" stroke="#000" stroke-width="1.2"/>
<rect x="547.6" y="605.6" width="10.8" height="14.5" fill="#2b6af3" stroke="#000" stroke-width="1.2"/>
<rect x="561.6" y="591.6" width="10.8" height="28.5" fill="#2b6af3" stroke="#000" stroke-width="1.2"/>
<rect x="575.6" y="620.5" width="10.8" height="7.9" fill="#f0207c" stroke="#000" stroke-width="1.2"/>
<rect x="589.6" y="620.5" width="10.8" height="7.9" fill="#f0207c" stroke="#000" stroke-width="1.2"/>
<rect x="603.6" y="605.6" width="10.8" height="14.5" fill="#2b6af3" stroke="#000" stroke-width="1.2"/>
<rect x="618.6" y="620.5" width="10.8" height="2.65" fill="#f0207c" stroke="#000" stroke-width="1.2"/>
<rect x="632.6" y="620.5" width="10.8" height="2.65" fill="#f0207c" stroke="#000" stroke-width="1.2"/>
<rect x="646.6" y="620.5" width="10.8" height="7.9" fill="#f0207c" stroke="#000" stroke-width="1.2"/>
<rect x="660.6" y="620.5" width="10.8" height="2.65" fill="#f0207c" stroke="#000" stroke-width="1.2"/>
<rect x="674.6" y="605.6" width="10.8" height="14.5" fill="#2b6af3" stroke="#000" stroke-width="1.2"/>
<rect x="689.6" y="610.6" width="10.8" height="9.5" fill="#2b6af3" stroke="#000" stroke-width="1.2"/>
<rect x="703.6" y="586.6" width="10.8" height="33.5" fill="#2b6af3" stroke="#000" stroke-width="1.2"/>
<rect x="717.6" y="605.6" width="10.8" height="14.5" fill="#2b6af3" stroke="#000" stroke-width="1.2"/>
<rect x="731.6" y="620.5" width="10.8" height="12.9" fill="#f0207c" stroke="#000" stroke-width="1.2"/>
<rect x="745.6" y="605.6" width="10.8" height="14.5" fill="#2b6af3" stroke="#000" stroke-width="1.2"/>
<rect x="760.6" y="615.6" width="10.8" height="4.5" fill="#2b6af3" stroke="#000" stroke-width="1.2"/>
<rect x="774.6" y="620.5" width="10.8" height="7.9" fill="#f0207c" stroke="#000" stroke-width="1.2"/>
<rect x="788.6" y="620.5" width="10.8" height="26.9" fill="#f0207c" stroke="#000" stroke-width="1.2"/>
<rect x="802.6" y="620.5" width="10.8" height="22.9" fill="#f0207c" stroke="#000" stroke-width="1.2"/>
<rect x="816.6" y="620.5" width="10.8" height="12.9" fill="#f0207c" stroke="#000" stroke-width="1.2"/>
<rect x="831.6" y="620.5" width="10.8" height="7.9" fill="#f0207c" stroke="#000" stroke-width="1.2"/>
<rect x="845.6" y="600.6" width="10.8" height="19.5" fill="#2b6af3" stroke="#000" stroke-width="1.2"/>
<rect x="859.6" y="620.5" width="10.8" height="2.9" fill="#f0207c" stroke="#000" stroke-width="1.2"/>
<rect x="873.6" y="615.6" width="10.8" height="4.5" fill="#2b6af3" stroke="#000" stroke-width="1.2"/>
<line x1="70" y1="620.5" x2="895" y2="620.5" stroke="#000"/>
<polyline points="70.75,612 85,612.5 98.75,615.75 112.5,612.5 127.5,606.25 142.5,601.75 156.25,605 170,609.5 183.75,608.25 197.5,607.5 212.5,608 226.25,609.25 240,613.75 253.75,615.75 267.5,615.75" fill="none" stroke="#2a9a08" stroke-width="2" stroke-linejoin="round" stroke-linecap="round"/>
<polyline points="267.5,615.75 283.75,627.5" fill="none" stroke="#f01010" stroke-width="2" stroke-linejoin="round" stroke-linecap="round"/>
<polyline points="283.75,627.5 297.5,616.25 410,616.25 425,612.5 440,610.5 453.75,615.75 555,615.75 568.75,612.5 595,615.75 695,615.75 710,611.25 724.5,608.25 738.75,612 753.75,613.25 767.5,613 780,615.75 794.5,615.75" fill="none" stroke="#2a9a08" stroke-width="2" stroke-linejoin="round" stroke-linecap="round"/>
<polyline points="794.5,615.75 808.75,627.5 822.5,630.75 837.5,632 851.25,627.5" fill="none" stroke="#f01010" stroke-width="2" stroke-linejoin="round" stroke-linecap="round"/>
<polyline points="851.25,627.5 865.5,615.75 880,615.75" fill="none" stroke="#2a9a08" stroke-width="2" stroke-linejoin="round" stroke-linecap="round"/>
<text x="80.5" y="585" font-size="13" fill="#c2c2c2" stroke="#c2c2c2" stroke-width="0.2" textLength="106" lengthAdjust="spacingAndGlyphs" opacity="0.85">Indice Calidad Vela</text>
<text x="67" y="585" font-size="13" fill="#000" stroke="#000" stroke-width="0.3" text-anchor="end">10</text>
<text x="67" y="620.25" font-size="13" fill="#000" stroke="#000" stroke-width="0.3" text-anchor="end">0</text>
<text x="67" y="667.5" font-size="13" fill="#000" stroke="#000" stroke-width="0.3" text-anchor="end">-10</text>
<text x="897" y="581" font-size="13" fill="#000" stroke="#000" stroke-width="0.3" textLength="19.5" lengthAdjust="spacingAndGlyphs">ICV</text>
<text x="897" y="592" font-size="13" fill="#000" stroke="#000" stroke-width="0.3" textLength="32.5" lengthAdjust="spacingAndGlyphs">5, 3, 1</text>
<text x="899" y="615" font-size="13" fill="#2222ee" stroke="#2222ee" stroke-width="0.3">1</text>
</g>
<g id="stoch">
<rect x="20.5" y="673.75" width="923" height="98.15" fill="#fff" stroke="#000" stroke-width="1.3"/>
<rect x="70.5" y="675.5" width="823" height="95.0" fill="none" stroke="#999"/>
<g stroke="#8c8c8c" stroke-width="1" stroke-dasharray="3 3">
<line x1="98.5" y1="676.5" x2="98.5" y2="770.5"/>
<line x1="112.5" y1="676.5" x2="112.5" y2="770.5"/>
<line x1="155.5" y1="676.5" x2="155.5" y2="770.5"/>
<line x1="197.5" y1="676.5" x2="197.5" y2="770.5"/>
<line x1="240.5" y1="676.5" x2="240.5" y2="770.5"/>
<line x1="283.5" y1="676.5" x2="283.5" y2="770.5"/>
<line x1="325.5" y1="676.5" x2="325.5" y2="770.5"/>
<line x1="339.5" y1="676.5" x2="339.5" y2="770.5"/>
<line x1="382.5" y1="676.5" x2="382.5" y2="770.5"/>
<line x1="425.5" y1="676.5" x2="425.5" y2="770.5"/>
<line x1="467.5" y1="676.5" x2="467.5" y2="770.5"/>
<line x1="510.5" y1="676.5" x2="510.5" y2="770.5"/>
<line x1="553.5" y1="676.5" x2="553.5" y2="770.5"/>
<line x1="595.5" y1="676.5" x2="595.5" y2="770.5"/>
<line x1="609.5" y1="676.5" x2="609.5" y2="770.5"/>
<line x1="652.5" y1="676.5" x2="652.5" y2="770.5"/>
<line x1="695.5" y1="676.5" x2="695.5" y2="770.5"/>
<line x1="737.5" y1="676.5" x2="737.5" y2="770.5"/>
<line x1="780.5" y1="676.5" x2="780.5" y2="770.5"/>
<line x1="822.5" y1="676.5" x2="822.5" y2="770.5"/>
<line x1="865.5" y1="676.5" x2="865.5" y2="770.5"/>
</g>
<polyline points="70.75,679.25 155,678.25 197.5,680.5 226,681.25 240,680.75 255,683 270,684.5 297.5,690 325.5,697.5 355,705.5 382.5,709.5 411.25,713.75 425.5,714.5 453.75,713 467.5,712.5 496.25,713.25 510.5,714.5 520,716.25 538.75,722.5 553.75,726.25 567.5,726.25 582.5,725 596.25,722 610,718 625,713.75 638.75,710.5 652.5,708 667.5,708 681.25,711.25 695.5,716.25 710,720.5 724.5,722 737.5,721.25 752.5,717.5 766.5,712.5 780.5,706.25 794.5,702.5 808.5,702.5 822.5,708 837.5,717.5 851.5,727.5 865.5,737 880.5,746.25" fill="none" stroke="#c8c8c8" stroke-width="2" stroke-dasharray="6 3"/>
<line x1="71" y1="713.5" x2="896" y2="713.5" stroke="#f01010" stroke-dasharray="3 3"/>
<line x1="71" y1="732.5" x2="896" y2="732.5" stroke="#167016" stroke-dasharray="3 3"/>
<polyline points="70.75,678 85,677.5 98.75,678.75 112.5,678 123.75,679.25 141.25,677.5 155,678.75 170,681.25 197.5,684.25 212.5,682 226.25,680.75 240,680 253.75,684.5 270,692.5 283.75,699.25 297.5,703.75 325.5,705.75 339.5,708 355,711.25 368.75,712 382.5,712" fill="none" stroke="#2a9a08" stroke-width="2" stroke-linejoin="round" stroke-linecap="round"/>
<polyline points="382.5,712 397.5,714.5 411.25,716.75 425.5,715" fill="none" stroke="#3a1c8c" stroke-width="2" stroke-linejoin="round" stroke-linecap="round"/>
<polyline points="425.5,715 440,709.5 453.75,707.5 467.5,708.75" fill="none" stroke="#2a9a08" stroke-width="2" stroke-linejoin="round" stroke-linecap="round"/>
<polyline points="467.5,708.75 482.5,715 496.25,721.25 510.5,728 520,728 538.75,728.75 553.75,727.5 567.5,723.75 582.5,715" fill="none" stroke="#3a1c8c" stroke-width="2" stroke-linejoin="round" stroke-linecap="round"/>
<polyline points="582.5,715 596.25,707.5 610,705 625,705 638.75,706.25 652.5,710.75" fill="none" stroke="#2a9a08" stroke-width="2" stroke-linejoin="round" stroke-linecap="round"/>
<polyline points="652.5,710.75 667.5,720 681.25,728 695.5,732 710,726.25 724.5,715.75" fill="none" stroke="#3a1c8c" stroke-width="2" stroke-linejoin="round" stroke-linecap="round"/>
<polyline points="724.5,715.75 737.5,705 752.5,698.75 766.5,698 780.5,698 794.5,703.75" fill="none" stroke="#2a9a08" stroke-width="2" stroke-linejoin="round" stroke-linecap="round"/>
<polyline points="794.5,703.75 808.5,716.25" fill="none" stroke="#3a1c8c" stroke-width="2" stroke-linejoin="round" stroke-linecap="round"/>
<polyline points="808.5,716.25 822.5,735.75 837.5,751.75 851.5,758 865.5,756.75 880.5,753" fill="none" stroke="#f01010" stroke-width="2" stroke-linejoin="round" stroke-linecap="round"/>
<text x="80.5" y="688" font-size="13" fill="#c2c2c2" stroke="#c2c2c2" stroke-width="0.2" textLength="87.5" lengthAdjust="spacingAndGlyphs" opacity="0.85">Full Estocastico</text>
<text x="67" y="687.7" font-size="13" fill="#000" stroke="#000" stroke-width="0.3" text-anchor="end">100</text>
<text x="67" y="712.4" font-size="13" fill="#000" stroke="#000" stroke-width="0.3" text-anchor="end">60</text>
<text x="67" y="731.4" font-size="13" fill="#000" stroke="#000" stroke-width="0.3" text-anchor="end">40</text>
<text x="67" y="770.6" font-size="13" fill="#000" stroke="#000" stroke-width="0.3" text-anchor="end">0</text>
<text x="897" y="684" font-size="13" fill="#000" stroke="#000" stroke-width="0.3" textLength="39.5" lengthAdjust="spacingAndGlyphs">EST. %</text>
<text x="897" y="694.5" font-size="13" fill="#000" stroke="#000" stroke-width="0.3" textLength="26.5" lengthAdjust="spacingAndGlyphs">FULL</text>
<text x="897" y="705.5" font-size="13" fill="#000" stroke="#000" stroke-width="0.3" textLength="44" lengthAdjust="spacingAndGlyphs">(28,3,6)</text>
<text x="899" y="751.5" font-size="13" fill="#2222ee" stroke="#2222ee" stroke-width="0.3" textLength="29.5" lengthAdjust="spacingAndGlyphs">19,79</text>
</g>
<text x="20" y="790" font-size="13" fill="#000" stroke="#000" stroke-width="0.3">ALCOA (AA)</text>
<text x="307" y="790" font-size="13" fill="#1c1cee" stroke="#1c1cee" stroke-width="0.3" textLength="575" lengthAdjust="spacingAndGlyphs">/Users/mserra/Library/CloudStorage/Dropbox/WorkDB/DatosBolsa/Configs/Config.DEFAULT.xml</text>
<rect x="919.5" y="776.6" width="66" height="17.9" fill="#fff" stroke="#9a9a9a"/><rect x="920" y="777.1" width="64.2" height="15.8" fill="#ee0d0a"/>
<text x="923" y="790" font-size="13" fill="#fff" stroke="#fff" stroke-width="0.3" textLength="23" lengthAdjust="spacingAndGlyphs">OFF</text><g id="toolbar">
<rect x="19" y="12" width="135" height="20" rx="5.5" fill="#000" opacity="0.18" filter="url(#sh)"/>
<rect x="19" y="11.25" width="135" height="20" rx="5.5" fill="#fff" stroke="#dcdcdc" stroke-width="0.5"/>
<rect x="136.25" y="13.75" width="15.5" height="15" rx="4" fill="url(#stp)"/>
<path d="M141.2 19.6 L144.0 16.9 L146.8 19.6 M141.2 22.9 L144.0 25.6 L146.8 22.9" fill="none" stroke="#fff" stroke-width="1.5" stroke-linecap="round" stroke-linejoin="round"/>
<text x="27.5" y="25.3" font-size="13" fill="#000" stroke="#000" stroke-width="0.3">CandleSticks</text>
<rect x="194.5" y="12" width="98.5" height="20" rx="5.5" fill="#000" opacity="0.18" filter="url(#sh)"/>
<rect x="194.5" y="11.25" width="98.5" height="20" rx="5.5" fill="#fff" stroke="#dcdcdc" stroke-width="0.5"/>
<rect x="275.25" y="13.75" width="15.5" height="15" rx="4" fill="url(#stp)"/>
<path d="M280.2 19.6 L283.0 16.9 L285.8 19.6 M280.2 22.9 L283.0 25.6 L285.8 22.9" fill="none" stroke="#fff" stroke-width="1.5" stroke-linecap="round" stroke-linejoin="round"/>
<text x="203.5" y="25.3" font-size="13" fill="#000" stroke="#000" stroke-width="0.3">3 mesos</text>
<rect x="304" y="12" width="91" height="20" rx="5.5" fill="#000" opacity="0.18" filter="url(#sh)"/>
<rect x="304" y="11.25" width="91" height="20" rx="5.5" fill="#fff" stroke="#dcdcdc" stroke-width="0.5"/>
<rect x="377.25" y="13.75" width="15.5" height="15" rx="4" fill="url(#stp)"/>
<path d="M382.2 19.6 L385.0 16.9 L387.8 19.6 M382.2 22.9 L385.0 25.6 L387.8 22.9" fill="none" stroke="#fff" stroke-width="1.5" stroke-linecap="round" stroke-linejoin="round"/>
<text x="312.5" y="25.3" font-size="13" fill="#000" stroke="#000" stroke-width="0.3">dia</text>
<circle cx="174.25" cy="21.25" r="11.9" fill="#9a96e0"/><circle cx="174.25" cy="21.25" r="10.6" fill="url(#help)"/><ellipse cx="174.25" cy="15.5" rx="7.5" ry="4.2" fill="#fff" opacity="0.18"/>
<text x="174.25" y="27.8" font-size="19" fill="#fff" text-anchor="middle" font-weight="bold">?</text>
<g><rect x="404.5" y="11.5" width="19" height="18.5" fill="#fff" stroke="#8a8a8a"/><rect x="405" y="12" width="18" height="6" fill="#111"/><path d="M408.5 15.6 l2 -1.2 l2 1.2 l2 -1.2 l2 1.2 l2 -1.2" stroke="#2fd02f" stroke-width="1.3" fill="none"/><rect x="406.5" y="19.5" width="15" height="8.5" fill="#fff" stroke="#444" stroke-width="0.8"/><path d="M409 24.8 l2.2 1.6 l3.2 -3.4 l3.2 -0.6" stroke="#2a2af0" stroke-width="1.2" fill="none"/><line x1="403.5" y1="30.6" x2="424.5" y2="30.6" stroke="#b0b0b0"/></g>
<rect x="435" y="15" width="14" height="14" rx="3.5" fill="url(#stp)"/><path d="M438.3 22.2 l2.8 3 l4.8 -6.4" fill="none" stroke="#fff" stroke-width="1.8" stroke-linecap="round" stroke-linejoin="round"/>
<text x="455" y="27" font-size="13" fill="#000" stroke="#000" stroke-width="0.3">Guies</text>
<rect x="505.25" y="15.25" width="13.5" height="13.5" rx="3.5" fill="#fff" stroke="#c2c2c2" stroke-width="0.9"/>
<text x="525.5" y="27" font-size="13" fill="#000" stroke="#000" stroke-width="0.3">Cursor</text>
<g><path d="M587 11 L591.2 31.4 Q597.3 34.6 603.4 31.4 L607.4 11 Z" fill="url(#trash)"/><path d="M589.4 22 L591.2 31.4 Q597.3 34.6 603.4 31.4 L604.6 25 Q597 30 589.4 22 Z" fill="#2c2c2c" opacity="0.55"/><ellipse cx="597.2" cy="10.9" rx="10.2" ry="3.8" fill="#7c7c7c" stroke="#5a5a5a" stroke-width="1.2"/><ellipse cx="597.2" cy="11.6" rx="8" ry="2.4" fill="#6a6a6a"/></g>
<g><rect x="623.3" y="7.3" width="19.7" height="26" rx="1" fill="url(#page)" stroke="#7a9ee8" stroke-width="0.9"/><path d="M622.6 12.6 Q626.5 8.2 629.6 10.4 L634 16.4 Q638.4 9.8 645.6 9.6 Q646.6 10.6 645.4 12 Q641 16 638.2 21 Q641.8 26.6 646.2 30.4 Q646 32 644.4 33 Q640.4 34.2 637.8 32 L633.6 26.4 Q629.6 31.8 624.6 34.2 Q621.6 34.2 620.2 31.2 Q626.4 25.6 629.4 20.8 Q625.6 16.6 622.6 12.6 Z" fill="url(#redx)" stroke="#8a0000" stroke-width="0.8" stroke-linejoin="round"/></g>
<g><rect x="656.2" y="15" width="22.8" height="17" rx="1.6" fill="#b6b6b6" stroke="#6a6a6a" stroke-width="0.9"/><rect x="656.6" y="15.4" width="6.4" height="16.2" fill="#8e8e8e"/><rect x="658.6" y="13.2" width="5.6" height="2.4" fill="#7a7a7a"/><rect x="656.6" y="29.4" width="22" height="2.2" fill="#9a9a9a"/><circle cx="672" cy="26.8" r="4.6" fill="#e4e4e4" stroke="#5a5a5a" stroke-width="0.9"/><circle cx="672" cy="26.8" r="2.6" fill="#4a5a3a"/><rect x="669.2" y="16.6" width="6.4" height="3.2" rx="0.8" fill="#fff" stroke="#8a8a8a" stroke-width="0.6"/><circle cx="672.4" cy="17.6" r="9.4" fill="url(#glow)"/></g>
<g><path d="M694.5 11.5 H714.5 V31.5 H694.5 Z" fill="#3434c4" stroke="#1c1c8c"/><rect x="697" y="12" width="14.6" height="10.6" fill="#bcd6f6"/><rect x="697" y="12" width="14.6" height="3.5" fill="#8cb4ee"/><rect x="698.5" y="25" width="11.5" height="6.5" fill="#c8c8c8"/><rect x="699.8" y="26" width="3" height="5" fill="#3434c4"/><rect x="712.4" y="12.6" width="1.6" height="1.8" fill="#e8e8f8"/></g>
<g><path d="M729 28.5 V15.6 Q729 14 730.6 14 H735.6 L737.6 16.4 H745 Q746.4 16.4 746.4 18 V20" fill="#f6ead6" stroke="#c8935a" stroke-width="1.1"/><path d="M729.4 28.6 L733.6 20.2 H750.2 L745.6 28.6 Z" fill="#fbf3e4" stroke="#c8935a" stroke-width="1.1" stroke-linejoin="round"/></g>
<g fill="#5cbc44" stroke="#3c9a2c" stroke-width="0.7" stroke-linejoin="round"><path d="M764.2 18.2 Q764.6 10 774 9.6 Q779.6 9.6 782.2 12.4 L784.8 10.2 L785.8 18.4 L777 17.6 L779.6 15.2 Q777.6 13.2 774.2 13.2 Q769 13.4 768.2 18.4 Z"/><path d="M785.4 21.6 Q785 29.8 775.6 30.2 Q770 30.2 767.4 27.4 L764.8 29.6 L763.8 21.4 L772.6 22.2 L770 24.6 Q772 26.6 775.4 26.6 Q780.6 26.4 781.4 21.4 Z"/></g>
<g><ellipse cx="808.8" cy="31.3" rx="12.4" ry="1.7" fill="#111" opacity="0.9"/><circle cx="812" cy="19.8" r="10.5" fill="url(#gsphere)"/>
<text x="811" y="29.6" font-size="27" fill="#ececec" text-anchor="middle" font-weight="bold" stroke="#c4c8c4" stroke-width="0.5">S</text>
<path d="M816.5 9.6 L821.4 13.6 L815.4 15 Z M807.6 32.2 L802.6 28 L808.8 26.8 Z" fill="#e4e4e4"/></g>
<g><rect x="831.5" y="6.5" width="26" height="27" fill="#f8f8f8"/><g transform="translate(844 21.5) rotate(-14) scale(1.12 0.95) skewX(-8)">
<text x="1.8" y="11.6" font-size="30" fill="#3e3e3e" text-anchor="middle" font-weight="bold">€</text>
<text x="0.9" y="10.8" font-size="30" fill="#6a6a6a" text-anchor="middle" font-weight="bold">€</text>
<text x="0" y="10" font-size="30" fill="url(#silver)" text-anchor="middle" font-weight="bold" stroke="#7a7a7a" stroke-width="0.6">€</text>
</g></g>
<g><path d="M889.09 17.69 L892.45 18.18 L892.45 22.22 L889.09 22.71 L887.91 25.56 L889.94 28.28 L887.08 31.14 L884.36 29.11 L881.51 30.29 L881.02 33.65 L876.98 33.65 L876.49 30.29 L873.64 29.11 L870.92 31.14 L868.06 28.28 L870.09 25.56 L868.91 22.71 L865.55 22.22 L865.55 18.18 L868.91 17.69 L870.09 14.84 L868.06 12.12 L870.92 9.26 L873.64 11.29 L876.49 10.11 L876.98 6.75 L881.02 6.75 L881.51 10.11 L884.36 11.29 L887.08 9.26 L889.94 12.12 L887.91 14.84 Z" fill="url(#gear)" stroke="#8c8c8c" stroke-width="1.6" stroke-linejoin="round"/><circle cx="879" cy="20.2" r="5.4" fill="#9a9a9a" stroke="#7c7c7c" stroke-width="0.8"/><circle cx="879" cy="20.2" r="2.5" fill="#fff" stroke="#666" stroke-width="0.9"/></g>
<g transform="rotate(-5 914 21)"><rect x="903.5" y="11" width="21" height="20" rx="1.5" fill="#fff" stroke="#8c8c8c"/><path d="M903.5 15.5 V12.5 Q903.5 11 905 11 H923 Q924.5 11 924.5 12.5 V15.5 Z" fill="#6fbf3c" stroke="#4f9a2c" stroke-width="0.6"/>
<text x="914" y="28.2" font-size="13" fill="#222" text-anchor="middle">17</text>
</g>
</g>
<g id="sidebar">
<circle cx="968.5" cy="22" r="6.4" fill="#fff" stroke="#bdbdbd" stroke-width="0.9"/>
<rect x="953.5" y="36.5" width="32" height="20.5" fill="url(#btn)" stroke="#9a9a9a" stroke-width="1.15"/>
<circle cx="967" cy="44" r="4.4" fill="#d6d6d6" stroke="#222" stroke-width="1.3"/><line x1="970.3" y1="47.4" x2="975.4" y2="53.3" stroke="#222" stroke-width="1.7" stroke-linecap="round"/>
<g><rect x="953.6" y="61.4" width="31" height="21" fill="#fdf6f8"/><path d="M955 82.6 V62.4 L956 64 L957 67.5 L958 70 L958.6 67.4 L959.4 67 L960.8 68 L961.4 74 L962 78.8 H964.8 L966 73.2 L967.2 65.2 L968.4 68.8 L969.6 73.2 L970.8 78 H973 V80.5 L974 82.6 Z" fill="#5058a8"/><path d="M978 82.6 V76.4 L979.4 74 L980.6 72 L982 74 L983.2 75.6 V82.6 Z" fill="#5058a8"/><line x1="955" y1="81.7" x2="984" y2="81.7" stroke="#b8b8c8" stroke-width="0.7"/><line x1="957.4" y1="61.5" x2="957.4" y2="82.4" stroke="#c4c4d6" stroke-width="0.9"/><line x1="971.6" y1="61.5" x2="971.6" y2="82.4" stroke="#c4c4d6" stroke-width="0.9"/><polyline points="955,67.2 956,68 957.2,69.4 960.8,69.4 961.6,68.5 967.6,68.5 968.6,69.2 969.4,66.4 970.4,68.2 972.4,69.4 974,68.6 976.4,72.4 978.8,68.6 981.2,68.5 982.8,69.6" fill="none" stroke="#e01010" stroke-width="1.1" stroke-linejoin="round"/><path d="M956.4 61.4 H953.6 V82.4 H956.4 M982 61.4 H984.8 V82.4 H982" fill="none" stroke="#a0a0a0" stroke-width="0.9"/></g>
<rect x="953.5" y="86.0" width="32" height="20.5" fill="url(#btn)" stroke="#9a9a9a" stroke-width="1.15"/>
<line x1="957" y1="95.6" x2="981" y2="95.6" stroke="#e62c2c" stroke-width="2.2"/>
<rect x="953.5" y="111.0" width="32" height="20.5" fill="url(#btn)" stroke="#9a9a9a" stroke-width="1.15"/>
<line x1="957" y1="120.6" x2="981" y2="120.6" stroke="#2e2ef4" stroke-width="2.2"/>
<rect x="953.5" y="136.0" width="32" height="20.5" fill="url(#btn)" stroke="#9a9a9a" stroke-width="1.15"/>
<path d="M957.5 151.5 L972.5 135 M965 156.5 L980.5 140.5" stroke="#222" stroke-width="1" fill="none"/><path d="M965.3 156 L963 146.6 L970.4 150.6 L968.6 142.8 L975.4 145.6 L974 136.8 L980 140.4" stroke="#3a3af0" stroke-width="0.9" fill="none"/>
<rect x="953.5" y="161.0" width="32" height="20.5" fill="url(#btn)" stroke="#9a9a9a" stroke-width="1.15"/>
<line x1="958.5" y1="181.5" x2="980" y2="160" stroke="#222" stroke-width="1.3"/>
<path d="M973 161 L972.5 167.5 L978.5 166.5 M961.5 173.5 L967 174 L966.2 179" stroke="#2e2ef4" stroke-width="1.1" fill="none"/>
<rect x="953.5" y="186.0" width="32" height="20.5" fill="url(#btn)" stroke="#9a9a9a" stroke-width="1.15"/>
<line x1="958.5" y1="206.5" x2="980" y2="185" stroke="#222" stroke-width="1.3"/>
<path d="M973 186 L972.5 192.5 L978.5 191.5 M961.5 198.5 L967 199 L966.2 204" stroke="#2e2ef4" stroke-width="1.1" fill="none"/>
<text x="957.6" y="197.2" font-size="11" fill="#ee1c24" stroke="#ee1c24" stroke-width="0.3" font-weight="bold">Σ</text>
<rect x="953.5" y="211.0" width="32" height="20.5" fill="url(#btn)" stroke="#9a9a9a" stroke-width="1.15"/>
<path d="M967.5 215 H971.5 V217.5 H974.6 L969.5 225.6 L964.4 217.5 H967.5 Z" fill="#f41a08"/>
<rect x="953.5" y="236.0" width="32" height="20.5" fill="url(#btn)" stroke="#9a9a9a" stroke-width="1.15"/>
<path d="M969.5 239.8 L974.6 248 H971.5 V250.6 H967.5 V248 H964.4 Z" fill="#0a0aff"/>
<rect x="953.5" y="261.0" width="32" height="20.5" fill="url(#btn)" stroke="#9a9a9a" stroke-width="1.15"/>
<path d="M960.2 266.4 H962.8 V269.6 H966 V272.2 H962.8 V275.6 H960.2 V272.2 H957 V269.6 H960.2 Z" fill="#8ed05c" stroke="#5fae34" stroke-width="0.7"/><path d="M970.5 266.4 H974.5 V269.5 H978 L972.5 276 L967 269.5 H970.5 Z" fill="#ee2018"/><circle cx="981" cy="275" r="2.3" fill="#fff" stroke="#ee2018" stroke-width="0.8"/>
<rect x="953.5" y="286.0" width="32" height="20.5" fill="#ececec"/>
<path d="M957 286.0 H953.5 V306.5 H957 M982 286.0 H985.5 V306.5 H982" fill="none" stroke="#a6a6a6"/>
<rect x="957" y="291.2" width="7" height="1.9" fill="#3c3c3c"/>
<rect x="966" y="291.2" width="7" height="1.9" fill="#3c3c3c"/>
<rect x="975" y="291.2" width="6" height="1.9" fill="#3c3c3c"/>
<rect x="957" y="296.2" width="7" height="1.9" fill="#3c3c3c"/>
<rect x="966" y="296.2" width="7" height="1.9" fill="#3c3c3c"/>
<rect x="975" y="296.2" width="6" height="1.9" fill="#3c3c3c"/>
<rect x="957" y="301" width="7" height="1.9" fill="#3c3c3c"/>
<rect x="966" y="301" width="7" height="1.9" fill="#3c3c3c"/>
<rect x="975" y="301" width="6" height="1.9" fill="#3c3c3c"/>
<rect x="953.5" y="311.5" width="32" height="20.5" fill="#ececec"/>
<path d="M957 311.5 H953.5 V332.0 H957 M982 311.5 H985.5 V332.0 H982" fill="none" stroke="#a6a6a6"/>
<path d="M956 313.3 H972 M956 330.3 H972" stroke="#1a1aff" stroke-width="1.1"/><line x1="963.8" y1="315" x2="963.8" y2="328.5" stroke="#1a1aff" stroke-width="1.2"/><path d="M963.8 313.8 L967 318 H960.6 Z M963.8 329.8 L967 325.6 H960.6 Z" fill="#1a1aff"/>
<text x="973" y="330.2" font-size="19.5" fill="#000" textLength="8.5" lengthAdjust="spacingAndGlyphs">%</text>
<rect x="953.5" y="336.0" width="32" height="20.5" fill="url(#btn)" stroke="#9a9a9a" stroke-width="1.15"/>
<line x1="958.4" y1="340.3" x2="971" y2="340.3" stroke="#2a5af8" stroke-width="1.2"/><line x1="958.4" y1="346.4" x2="971" y2="346.4" stroke="#111" stroke-width="1.4"/><line x1="958.4" y1="352" x2="971" y2="352" stroke="#ee3a2a" stroke-width="1.4"/>
<text x="972.6" y="356" font-size="19.5" fill="#000" textLength="8.5" lengthAdjust="spacingAndGlyphs">%</text>
<rect x="953.5" y="362.0" width="32" height="20" fill="url(#btn)" stroke="#9a9a9a" stroke-width="1.15"/>
<rect x="960" y="363" width="19" height="18.6" fill="#dedee8" opacity="0.85"/><circle cx="969.4" cy="372" r="7.2" fill="#ecdcdc" stroke="#b02424" stroke-width="2.2"/><line x1="964.4" y1="367" x2="974.4" y2="377" stroke="#b02424" stroke-width="1.9"/><path d="M963.4 369.4 A6.6 6.6 0 0 1 975.4 369.4" fill="none" stroke="#e07a7a" stroke-width="0.9" opacity="0.8"/>
<rect x="953.5" y="386.0" width="32" height="20" fill="url(#btn)" stroke="#9a9a9a" stroke-width="1.15"/>
<circle cx="969.2" cy="396" r="5.9" fill="url(#reddot)"/>
<rect x="953.5" y="409.0" width="32" height="20" fill="url(#btn)" stroke="#9a9a9a" stroke-width="1.15"/>
<g fill="#2a62d8" stroke="#2a62d8" stroke-width="0.5" stroke-linejoin="round"><path d="M963.6 417 Q966.6 412.4 971.2 413.4 L970.8 411.2 L975.4 414.8 L970.4 418.2 L970.6 416 Q967 415 963.6 417 Z"/><path d="M975 421.6 Q972 426.2 967.4 425.2 L967.8 427.4 L963.2 423.8 L968.2 420.4 L968 422.6 Q971.6 423.6 975 421.6 Z"/></g>
<circle cx="968.5" cy="473" r="6.4" fill="#fff" stroke="#bdbdbd" stroke-width="0.9"/>
<rect x="953.5" y="488.0" width="32" height="20.5" fill="#fcfcfc" stroke="#a6a6a6"/>
<path d="M961.6 493.3 H965.2 V496.6 H969 L963.4 503.1 L957.9 496.6 H961.6 Z" fill="#e8241a"/>
<path d="M976.5 493.3 L982 500.0 H978.3 V502.6 H974.7 V500.0 H971 Z" fill="#7cc242"/>
<rect x="953.5" y="514.0" width="32" height="20" fill="url(#btn)" stroke="#9a9a9a" stroke-width="1.15"/>
<line x1="958.5" y1="518.7" x2="970.6" y2="518.7" stroke="#2a5af8" stroke-width="1.3"/><line x1="958.5" y1="524.5" x2="970.6" y2="524.5" stroke="#111" stroke-width="1.5"/><line x1="958.5" y1="529.9" x2="970.6" y2="529.9" stroke="#ee3a2a" stroke-width="1.5"/>
<text x="972.8" y="532.3" font-size="19.5" fill="#000" textLength="8.5" lengthAdjust="spacingAndGlyphs">%</text>
<rect x="953.5" y="541.5" width="32" height="20.5" fill="url(#btn)" stroke="#9a9a9a" stroke-width="1.15"/>
<g fill="none" stroke-width="2" stroke-linejoin="round"><line x1="958" y1="555.2" x2="983" y2="555.2" stroke="#38a838" stroke-width="0.9" stroke-dasharray="2.5 1.8"/><line x1="977.4" y1="552.5" x2="977.4" y2="560.2" stroke="#8a8ac0" stroke-width="0.8"/><path d="M955.7 545.6 Q961 548 967.5 559.6 Q972.5 553 977 541.6" stroke="#1c1cf0"/><path d="M955.7 544.6 Q962 546 970.3 557.4 Q976 552 981.2 541.6" stroke="#ee1c1c"/></g>
<circle cx="968.5" cy="580" r="6.9" fill="#2e73f4"/><circle cx="968.5" cy="580" r="2.9" fill="#fff"/>
<rect x="953.5" y="596.0" width="32" height="20.5" fill="#fcfcfc" stroke="#a6a6a6"/>
<path d="M961.6 601.3 H965.2 V604.6 H969 L963.4 611.1 L957.9 604.6 H961.6 Z" fill="#e8241a"/>
<path d="M976.5 601.3 L982 608.0 H978.3 V610.6 H974.7 V608.0 H971 Z" fill="#7cc242"/>
<rect x="953.5" y="620.0" width="32" height="20" fill="url(#btn)" stroke="#9a9a9a" stroke-width="1.15"/>
<line x1="958.5" y1="624.7" x2="970.6" y2="624.7" stroke="#2a5af8" stroke-width="1.3"/><line x1="958.5" y1="630.5" x2="970.6" y2="630.5" stroke="#111" stroke-width="1.5"/><line x1="958.5" y1="635.9" x2="970.6" y2="635.9" stroke="#ee3a2a" stroke-width="1.5"/>
<text x="972.8" y="638.3" font-size="19.5" fill="#000" textLength="8.5" lengthAdjust="spacingAndGlyphs">%</text>
<rect x="953.5" y="644.0" width="32" height="20.5" fill="url(#btn)" stroke="#9a9a9a" stroke-width="1.15"/>
<g fill="none" stroke-width="2" stroke-linejoin="round"><line x1="958" y1="657.7" x2="983" y2="657.7" stroke="#38a838" stroke-width="0.9" stroke-dasharray="2.5 1.8"/><line x1="977.4" y1="655.0" x2="977.4" y2="662.7" stroke="#8a8ac0" stroke-width="0.8"/><path d="M955.7 648.1 Q961 650.5 967.5 662.1 Q972.5 655.5 977 644.1" stroke="#1c1cf0"/><path d="M955.7 647.1 Q962 648.5 970.3 659.9 Q976 654.5 981.2 644.1" stroke="#ee1c1c"/></g>
<circle cx="968.5" cy="682.5" r="6.4" fill="#fff" stroke="#bdbdbd" stroke-width="0.9"/>
<rect x="953.5" y="698.5" width="32" height="20.5" fill="#fcfcfc" stroke="#a6a6a6"/>
<path d="M961.6 703.8 H965.2 V707.1 H969 L963.4 713.6 L957.9 707.1 H961.6 Z" fill="#e8241a"/>
<path d="M976.5 703.8 L982 710.5 H978.3 V713.1 H974.7 V710.5 H971 Z" fill="#7cc242"/>
<rect x="953.5" y="723.0" width="32" height="20" fill="url(#btn)" stroke="#9a9a9a" stroke-width="1.15"/>
<line x1="958.5" y1="727.7" x2="970.6" y2="727.7" stroke="#2a5af8" stroke-width="1.3"/><line x1="958.5" y1="733.5" x2="970.6" y2="733.5" stroke="#111" stroke-width="1.5"/><line x1="958.5" y1="738.9" x2="970.6" y2="738.9" stroke="#ee3a2a" stroke-width="1.5"/>
<text x="972.8" y="741.3" font-size="19.5" fill="#000" textLength="8.5" lengthAdjust="spacingAndGlyphs">%</text>
<rect x="953.5" y="748.0" width="32" height="20.5" fill="url(#btn)" stroke="#9a9a9a" stroke-width="1.15"/>
<g fill="none" stroke-width="2" stroke-linejoin="round"><line x1="958" y1="761.7" x2="983" y2="761.7" stroke="#38a838" stroke-width="0.9" stroke-dasharray="2.5 1.8"/><line x1="977.4" y1="759.0" x2="977.4" y2="766.7" stroke="#8a8ac0" stroke-width="0.8"/><path d="M955.7 752.1 Q961 754.5 967.5 766.1 Q972.5 759.5 977 748.1" stroke="#1c1cf0"/><path d="M955.7 751.1 Q962 752.5 970.3 763.9 Q976 758.5 981.2 748.1" stroke="#ee1c1c"/></g>
</g>
</svg></body></html>
